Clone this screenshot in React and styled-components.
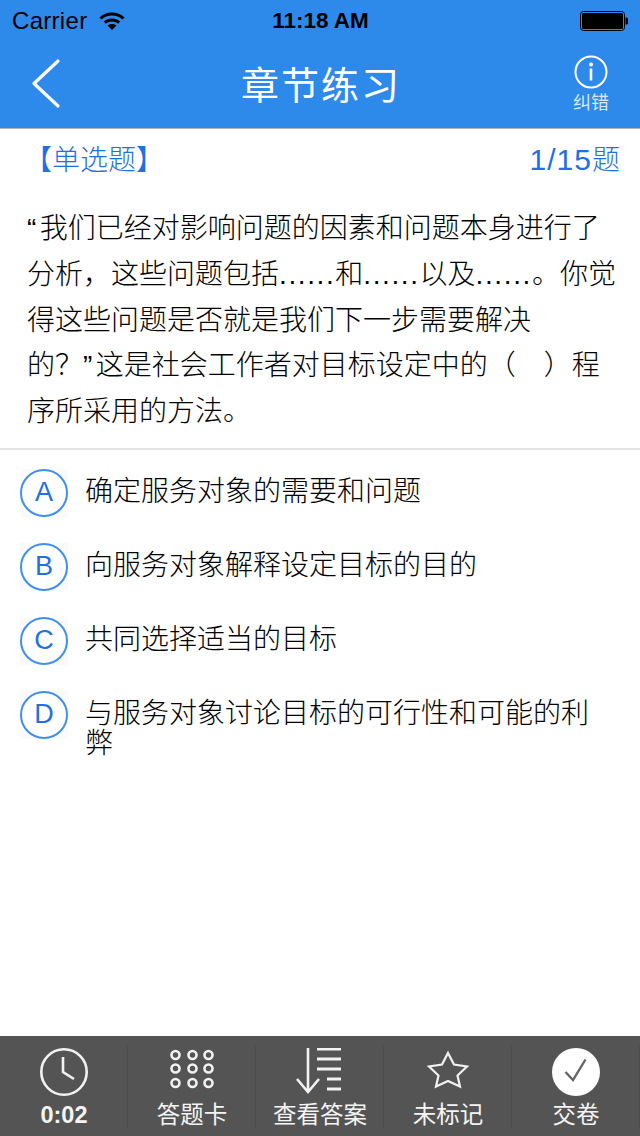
import React from "react";
import styled, { createGlobalStyle } from "styled-components";

const GlobalStyle = createGlobalStyle`
  html, body {
    margin: 0;
    padding: 0;
    background: #fff;
  }
  body {
    font-family: "Liberation Sans", "Noto Sans CJK SC", sans-serif;
  }
`;

const Page = styled.div`
  width: 640px;
  height: 1136px;
  display: flex;
  flex-direction: column;
  overflow: hidden;
  background: #fff;
`;

const Header = styled.header`
  height: 128px;
  flex: none;
  display: flex;
  flex-direction: column;
  background: #2d8aeb;
  border-bottom: 1px solid #b3b3b3;
`;

const StatusBar = styled.div`
  height: 40px;
  padding: 2px 11px 0 12px;
  box-sizing: border-box;
  display: grid;
  grid-template-columns: 1fr auto 1fr;
  align-items: center;
  color: #000;
`;

const Carrier = styled.div`
  display: flex;
  align-items: center;
  gap: 12px;
  font-size: 24px;
  letter-spacing: 0.3px;
`;

const Time = styled.div`
  font-size: 22.5px;
  font-weight: 700;
`;

const Battery = styled.div`
  justify-self: end;
  display: flex;
  margin: 0 1px 1px 0;
`;

const NavBar = styled.div`
  height: 88px;
  display: grid;
  grid-template-columns: 1fr auto 1fr;
  align-items: center;
  color: #fff;
`;

const BackButton = styled.div`
  padding: 0 0 0 30px;
  display: flex;
  align-items: center;
  height: 52px;
`;

const Title = styled.div`
  padding: 3px 0 0 2px;
  font-size: 38px;
  letter-spacing: 2px;
  line-height: 44px;
`;

const Correct = styled.div`
  justify-self: end;
  width: 60px;
  margin-right: 19px;
  display: flex;
  flex-direction: column;
  align-items: center;
  font-size: 18px;
  line-height: 22px;
  color: #d6e8fb;
  svg {
    margin-bottom: 3px;
  }
`;

const Body = styled.main`
  flex: 1;
  min-height: 0;
`;

const TypeRow = styled.div`
  height: 58px;
  padding: 0 20px 0 24px;
  display: flex;
  justify-content: space-between;
  align-items: center;
  font-size: 28px;
  font-weight: 300;
  color: #1f70e2;
`;

const Count = styled.span`
  font-size: 30px;
  letter-spacing: 1px;
`;

const CountUnit = styled.span`
  font-size: 28px;
  letter-spacing: 0;
`;

const Question = styled.p`
  margin: 0;
  padding: 19px 20px 13px 27px;
  font-size: 28px;
  font-weight: 300;
  line-height: 45.75px;
  color: #000;
  border-bottom: 2px solid #e4e4e4;
`;

const Quote = styled.span`
  letter-spacing: 3.5px;
`;

const Dots = styled.span`
  letter-spacing: 1.6px;
`;

const Blank = styled.span`
  display: inline-block;
  width: 28px;
`;

const Options = styled.div`
  padding: 19px 20px 0;
  display: flex;
  flex-direction: column;
  gap: 26px;
`;

const Option = styled.div`
  display: flex;
  align-items: flex-start;
  gap: 17px;
`;

const Badge = styled.div`
  width: 48px;
  height: 48px;
  flex: none;
  background: #fafafa;
`;

const Circle = styled.div`
  width: 48px;
  height: 48px;
  box-sizing: border-box;
  display: flex;
  align-items: center;
  justify-content: center;
  border: 2px solid #3f90ee;
  border-radius: 50%;
  background: #fff;
  font-size: 27px;
  color: #1f70e2;
`;

const OptionText = styled.div`
  flex: 1;
  padding: 8px 28px 0 0;
  font-size: 28px;
  font-weight: 300;
  line-height: 30px;
  color: #000;
`;

const Toolbar = styled.footer`
  height: 100px;
  flex: none;
  padding: 8px 0;
  box-sizing: border-box;
  display: grid;
  grid-template-columns: repeat(5, 1fr);
  background: #545454;
`;

const ToolItem = styled.div`
  display: flex;
  flex-direction: column;
  align-items: center;
  padding-left: 1px;
  border-right: 1px solid #4c4c4c;
  color: #f4f4f4;
  font-size: 23.5px;
  line-height: 28px;
  svg {
    display: block;
    margin: 4px 0 0;
  }
`;

const ToolLabel = styled.div`
  margin-top: 5px;
  font-weight: ${(p) => (p.$strong ? 700 : 400)};
  white-space: nowrap;
`;

const options = [
  { key: "A", text: "确定服务对象的需要和问题" },
  { key: "B", text: "向服务对象解释设定目标的目的" },
  { key: "C", text: "共同选择适当的目标" },
  { key: "D", text: "与服务对象讨论目标的可行性和可能的利弊" },
];

const WifiIcon = () => (
  <svg width="26" height="20" viewBox="0 0 26 20" fill="none">
    <path d="M1.5 7.5C7.8 1.6 18.2 1.6 24.5 7.5" stroke="#000" strokeWidth="3" />
    <path d="M5.8 11.6C9.8 8 16.2 8 20.2 11.6" stroke="#000" strokeWidth="3" />
    <path d="M13 19L8.6 14.6C11 12.6 15 12.6 17.4 14.6Z" fill="#000" />
  </svg>
);

const BatteryIcon = () => (
  <svg width="48" height="20" viewBox="0 0 48 20">
    <rect x="0.5" y="0.5" width="44" height="19" rx="3" fill="none" stroke="#000" />
    <rect x="2" y="2" width="41" height="16" rx="1.5" fill="#000" />
    <path d="M45.5 6.5h1a1.5 1.5 0 0 1 1.5 1.5v4a1.5 1.5 0 0 1-1.5 1.5h-1Z" fill="#000" />
  </svg>
);

const BackIcon = () => (
  <svg width="32" height="52" viewBox="0 0 32 52" fill="none">
    <path d="M28 3L4 25.5L28 48" stroke="#fff" strokeWidth="3.2" strokeLinecap="round" strokeLinejoin="round" />
  </svg>
);

const InfoIcon = () => (
  <svg width="34" height="34" viewBox="0 0 34 34" fill="none">
    <circle cx="17" cy="17" r="15.5" stroke="#fff" strokeWidth="2" />
    <circle cx="17" cy="9.5" r="2" fill="#fff" />
    <rect x="15.7" y="13.5" width="2.6" height="12" fill="#fff" />
  </svg>
);

const ClockIcon = () => (
  <svg width="48" height="48" viewBox="0 0 48 48" fill="none">
    <circle cx="24" cy="24" r="22.7" stroke="#f2f2f2" strokeWidth="2.6" />
    <path d="M23 9V24L34 31" stroke="#f2f2f2" strokeWidth="2.6" />
  </svg>
);

const GridIcon = () => (
  <svg width="48" height="48" viewBox="0 0 48 48" fill="none">
    {[7.5, 24.5, 40.5].map((x) =>
      [7, 20.5, 35].map((y) => (
        <circle key={`${x}-${y}`} cx={x} cy={y} r="4" stroke="#f2f2f2" strokeWidth="2.6" />
      ))
    )}
  </svg>
);

const AnswerIcon = () => (
  <svg width="48" height="48" viewBox="0 0 48 48" fill="none" stroke="#f2f2f2">
    <path d="M12 -1V44M1 31L12 44L23 31" strokeWidth="2.6" />
    <path d="M21 1H45M21 11H45M21 21H45M31 31H45M31 41H45" strokeWidth="3" />
  </svg>
);

const StarIcon = () => (
  <svg width="48" height="48" viewBox="0 0 48 48" fill="none">
    <path
      d="M24 5L30 16.5L43 18.5L33.5 27.5L36 38.5L24 33L12 38.5L14.5 27.5L5 18.5L18 16.5Z"
      stroke="#f2f2f2"
      strokeWidth="2.2"
    />
  </svg>
);

const SubmitIcon = () => (
  <svg width="48" height="48" viewBox="0 0 48 48" fill="none">
    <circle cx="24" cy="24" r="24" fill="#fff" />
    <path d="M13.5 24L21 32L33.5 11.5" stroke="#666" strokeWidth="2.4" />
  </svg>
);

const tools = [
  { icon: <ClockIcon />, label: "0:02", strong: true },
  { icon: <GridIcon />, label: "答题卡" },
  { icon: <AnswerIcon />, label: "查看答案" },
  { icon: <StarIcon />, label: "未标记" },
  { icon: <SubmitIcon />, label: "交卷" },
];

export default function App() {
  return (
    <Page lang="zh-CN">
      <GlobalStyle />
      <Header>
        <StatusBar>
          <Carrier>
            Carrier
            <WifiIcon />
          </Carrier>
          <Time>11:18 AM</Time>
          <Battery>
            <BatteryIcon />
          </Battery>
        </StatusBar>
        <NavBar>
          <BackButton>
            <BackIcon />
          </BackButton>
          <Title>章节练习</Title>
          <Correct>
            <InfoIcon />
            纠错
          </Correct>
        </NavBar>
      </Header>
      <Body>
        <TypeRow>
          <span>【单选题】</span>
          <Count>
            1/15<CountUnit>题</CountUnit>
          </Count>
        </TypeRow>
        <Question>
          <Quote>“</Quote>我们已经对影响问题的因素和问题本身进行了分析，这些问题包括<Dots>......</Dots>和<Dots>......</Dots>以及<Dots>......</Dots>。你觉得这些问题是否就是我们下一步需要解决
          <br />
          的？<Quote>”</Quote>这是社会工作者对目标设定中的（<Blank />）程序所采用的方法。
        </Question>
        <Options>
          {options.map((o) => (
            <Option key={o.key}>
              <Badge>
                <Circle>{o.key}</Circle>
              </Badge>
              <OptionText>{o.text}</OptionText>
            </Option>
          ))}
        </Options>
      </Body>
      <Toolbar>
        {tools.map((t) => (
          <ToolItem key={t.label}>
            {t.icon}
            <ToolLabel $strong={t.strong}>{t.label}</ToolLabel>
          </ToolItem>
        ))}
      </Toolbar>
    </Page>
  );
}
